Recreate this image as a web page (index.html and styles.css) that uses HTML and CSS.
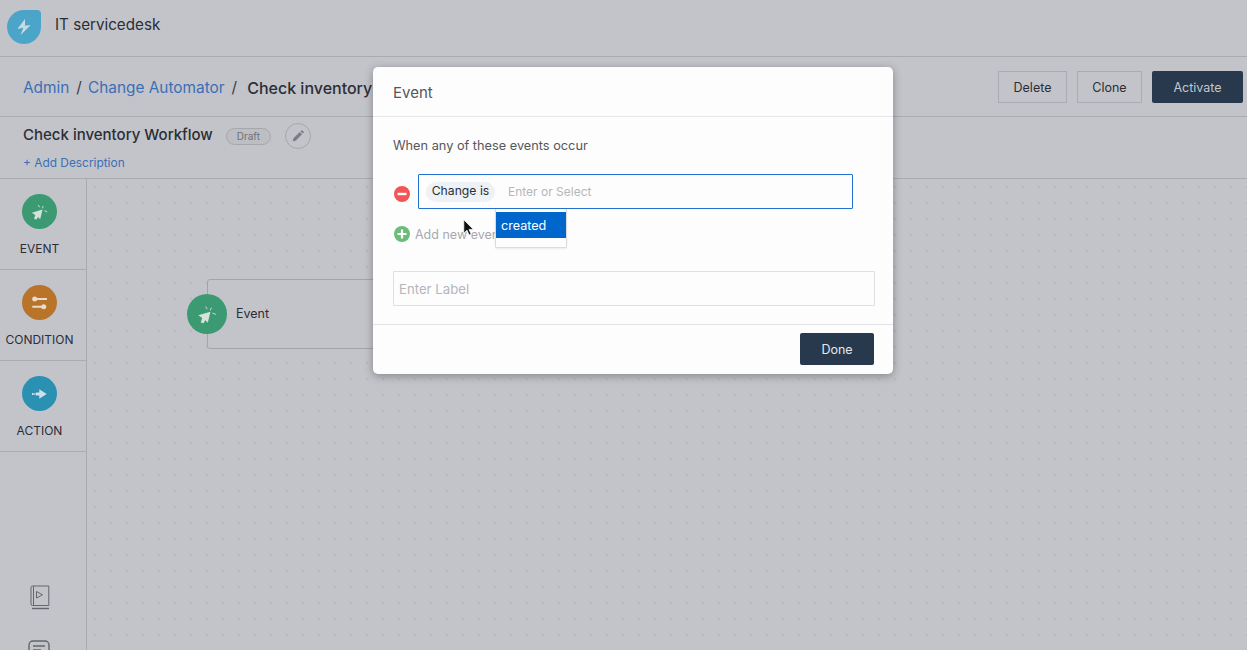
FILE: index.html
```
<!DOCTYPE html>
<html lang="en">
<head>
<meta charset="utf-8">
<title>Check inventory Workflow</title>
<link rel="stylesheet" href="styles.css">
</head>
<body>
<div class="page">
  <header class="topbar">
    <div class="logo">
      <svg viewBox="0 0 34 34" width="34" height="34"><path d="M18 9 10.300 19l6-1.300L13.700 25l10-10-5.700.7z" fill="#c5dbe4"/></svg>
    </div>
    <span class="app-name">IT servicedesk</span>
  </header>
  <div class="crumbbar">
    <nav class="crumbs">
      <a class="crumb-link">Admin</a><span class="sep">/</span>
      <a class="crumb-link">Change Automator</a><span class="sep">/</span>
      <span class="crumb-current">Check inventory</span>
    </nav>
    <div class="actions">
      <button class="btn">Delete</button>
      <button class="btn btn-clone">Clone</button>
      <button class="btn btn-primary">Activate</button>
    </div>
  </div>
  <div class="titlebar">
    <div class="title-row">
      <h1 class="title">Check inventory Workflow</h1>
      <span class="badge">Draft</span>
      <span class="edit">
        <svg viewBox="0 0 12 12" width="12" height="12"><path d="M0.800 11.200 1.300 8.400 7.800 1.900 10.100 4.200 3.600 10.700zM8.500 1.200 9.300.4a.8.8 0 0 1 1.100 0l1.200 1.200a.8.8 0 0 1 0 1.100l-.8.8z" fill="#7b7d84"/></svg>
      </span>
    </div>
    <a class="add-desc">+ Add Description</a>
  </div>
  <div class="workspace">
    <aside class="sidebar">
      <div class="tool">
        <span class="tool-icon green">
          <svg viewBox="0 0 35 35" width="35" height="35"><path d="M20.500 15.500 9.800 18.700l3.500 2.300-1.300 4 2.500.6 1.500-2.700 2.200 2.300z" fill="#d3e3db"/><path d="M16.300 11l1.300 2.300M21.300 12l-1 2.300M22.300 16.700l3 1.200" stroke="#d3e3db" stroke-width=".9" fill="none"/></svg>
        </span>
        <span class="tool-label">EVENT</span>
      </div>
      <div class="tool">
        <span class="tool-icon orange">
          <svg viewBox="0 0 35 35" width="35" height="35"><circle cx="12.700" cy="14" r="2.500" fill="#e9dccb"/><path d="M15 14h10M10.300 21.700H20" stroke="#e9dccb" stroke-width="2"/><circle cx="21.700" cy="21.700" r="2.500" fill="#e9dccb"/></svg>
        </span>
        <span class="tool-label">CONDITION</span>
      </div>
      <div class="tool">
        <span class="tool-icon blue">
          <svg viewBox="0 0 35 35" width="35" height="35"><path d="M17.300 13.300 24.700 18l-7.400 4.700v-3.200H14v-3h3.300z" fill="#cfe0e8"/><rect x="10" y="17" width="1.600" height="2" fill="#cfe0e8"/><rect x="12.300" y="17" width="1.200" height="2" fill="#cfe0e8"/></svg>
        </span>
        <span class="tool-label">ACTION</span>
      </div>
      <div class="side-foot">
        <svg class="book" viewBox="0 0 20 25" width="20" height="25"><path d="M2.500 1h16.300v19.500H2.500A1.500 1.500 0 0 1 1 19V2.500A1.500 1.500 0 0 1 2.500 1zM3.500 1v19.500" fill="none" stroke="#64666d" stroke-width="1"/><path d="M2 23.500h17" stroke="#64666d" stroke-width="1.400"/><path d="M6.500 6.500v6.500l6-3.200z" fill="none" stroke="#64666d" stroke-width="1"/></svg>
        <svg class="chat" viewBox="0 0 22 22" width="22" height="22"><path d="M5 1h12a4 4 0 0 1 4 4v8a4 4 0 0 1-4 4H5a4 4 0 0 1-4-4V5a4 4 0 0 1 4-4z" fill="none" stroke="#64666d" stroke-width="1.400"/><path d="M5 6h12M5 10h8" stroke="#64666d" stroke-width="1.400"/></svg>
      </div>
    </aside>
    <main class="canvas">
      <div class="node">
        <span class="node-icon">
          <svg viewBox="0 0 35 35" width="40" height="40"><path d="M20.500 15.500 9.800 18.700l3.500 2.300-1.300 4 2.500.6 1.500-2.700 2.200 2.300z" fill="#d3e3db"/><path d="M16.300 11l1.300 2.300M21.300 12l-1 2.300M22.300 16.700l3 1.200" stroke="#d3e3db" stroke-width=".8" fill="none"/></svg>
        </span>
        <span class="node-label">Event</span>
      </div>
    </main>
  </div>

  <section class="modal">
    <div class="modal-head">Event</div>
    <div class="modal-body">
      <p class="intro">When any of these events occur</p>
      <div class="event-row">
        <svg class="round-icon" viewBox="0 0 16 16" width="16" height="16"><circle cx="8" cy="8" r="8" fill="#f25555"/><rect x="3.500" y="6.800" width="9" height="2.400" fill="#fff"/></svg>
        <div class="event-input">
          <span class="pill">Change is</span>
          <span class="placeholder">Enter or Select</span>
        </div>
      </div>
      <div class="add-row">
        <svg class="round-icon" viewBox="0 0 16 16" width="16" height="16"><circle cx="8" cy="8" r="8" fill="#6cbd7a"/><path d="M3.500 8h9M8 3.500v9" stroke="#fff" stroke-width="2.200"/></svg>
        <span class="add-text">Add new event</span>
      </div>
      <div class="label-input">Enter Label</div>
    </div>
    <div class="modal-foot">
      <button class="btn btn-primary btn-done">Done</button>
    </div>
    <div class="dropdown"><div class="option">created</div></div>
    <svg class="cursor" viewBox="0 0 12 17" width="12" height="17"><path d="M.8.8v13.400l3.200-3 2.100 4.800 2-.9-2.100-4.700h4.300z" fill="#111" stroke="#fff" stroke-width=".7"/></svg>
  </section>
</div>
</body>
</html>
```
FILE: styles.css
```
* { box-sizing: border-box; }
html, body { margin: 0; padding: 0; }
body {
  font-family: Inter, "Liberation Sans", sans-serif;
  color: #2b2e36;
  background: #c3c4c9;
}
.page {
  position: relative;
  width: 1247px;
  height: 650px;
  overflow: hidden;
  display: flex;
  flex-direction: column;
  background: #c3c4c9;
}
.topbar {
  flex: none;
  height: 57px;
  display: flex;
  align-items: center;
  padding: 0 0 7px 7px;
  border-bottom: 1px solid #a9abb1;
}
.logo {
  width: 34px;
  height: 34px;
  margin-top: 4px;
  background: #4ba5c9;
  border-radius: 50% 4px 50% 50%;
}
.logo svg { display: block; }
.app-name { margin-left: 14px; font-size: 15.200px; }
.crumbbar {
  flex: none;
  height: 60px;
  display: flex;
  justify-content: space-between;
  align-items: flex-start;
  padding: 14px 4px 0 23px;
  border-bottom: 1px solid #a9abb1;
}
.crumbs { display: flex; font-size: 15.400px; line-height: 34px; white-space: nowrap; }
.crumb-link { color: #3b6fb5; }
.sep { margin: 0 6px 0 7px; color: #3a3d44; }
.crumb-current { margin-left: 4px; font-size: 16px; font-weight: 500; }
.actions { display: flex; gap: 10px; }
.btn {
  width: 69px;
  height: 32px;
  padding: 0;
  font: 400 12.500px Inter, "Liberation Sans", sans-serif;
  color: #2b2e36;
  background: transparent;
  border: 1px solid #a9adb3;
}
.btn-clone { width: 65px; }
.btn-primary {
  width: 91px;
  color: #c3c6cb;
  background: #28394d;
  border: 0;
  border-radius: 2px;
}
.titlebar {
  flex: none;
  height: 62px;
  padding: 9px 0 0 23px;
  border-bottom: 1px solid #a9abb1;
}
.title-row { display: flex; align-items: center; height: 20px; }
.title { margin: -3px 0 0; font-size: 15px; font-weight: 500; line-height: 20px; }
.badge {
  width: 45px;
  height: 17px;
  margin-left: 13px;
  font-size: 10px;
  line-height: 15px;
  text-align: center;
  color: #6f7178;
  background: #bcbec4;
  border: 1px solid #a5a7ad;
  border-radius: 9px;
}
.edit {
  width: 26px;
  height: 26px;
  margin-left: 14px;
  display: flex;
  align-items: center;
  justify-content: center;
  border: 1px solid #a5a7ad;
  border-radius: 50%;
}
.add-desc { display: block; margin-top: 7px; font-size: 11.900px; line-height: 20px; color: #3b6fb5; }
.workspace { flex: 1; display: flex; min-height: 0; }
.sidebar {
  flex: none;
  width: 87px;
  display: flex;
  flex-direction: column;
  border-right: 1px solid #a9abb1;
}
.tool {
  flex: none;
  height: 91px;
  display: flex;
  flex-direction: column;
  align-items: center;
  padding: 15px 7px 0 0;
  border-bottom: 1px solid #a9abb1;
}
.tool-icon {
  width: 35px;
  height: 35px;
  border-radius: 50%;
  display: block;
}
.tool-icon svg { display: block; }
.green { background: #3b9a72; }
.orange { background: #b9742a; }
.blue { background: #2a91b3; }
.tool-label { margin-top: 12px; font-size: 12px; line-height: 16px; }
.side-foot {
  flex: none;
  display: flex;
  flex-direction: column;
  align-items: center;
  gap: 30px;
  padding: 133px 7px 0 0;
}
.book, .chat { display: block; flex: none; }
.chat { margin-left: -2px; }
.canvas {
  flex: 1;
  position: relative;
  background-image: radial-gradient(circle at 8px 8px, #b9bac0 1.100px, transparent 1.700px);
  background-size: 16px 16px;
}
.node {
  position: absolute;
  left: 120px;
  top: 100px;
  width: 220px;
  height: 70px;
  border: 1px solid #a2a4aa;
  border-radius: 3px;
  background: #c3c4c9;
}
.node-icon {
  position: absolute;
  left: -21px;
  top: 14px;
  width: 40px;
  height: 40px;
  background: #3b9a72;
  border-radius: 50%;
}
.node-icon svg { display: block; }
.node-label { position: absolute; left: 28px; top: 25px; font-size: 12.500px; line-height: 18px; }
.modal {
  position: absolute;
  left: 373px;
  top: 67px;
  width: 520px;
  height: 307px;
  background: #fdfdfd;
  border-radius: 5px;
  box-shadow: 0 2px 8px rgba(40, 42, 50, .4);
  display: flex;
  flex-direction: column;
}
.modal-head {
  flex: none;
  height: 50px;
  padding-left: 20px;
  font-size: 15px;
  line-height: 51px;
  color: #55575c;
  border-bottom: 1px solid #e8e8ea;
}
.modal-body { flex: 1; padding: 0 18px 0 20px; }
.intro { margin: 0; padding-top: 20px; font-size: 12.750px; line-height: 18px; color: #55575c; }
.event-row { display: flex; align-items: center; margin-top: 19px; height: 35px; }
.round-icon { flex: none; display: block; }
.event-row .round-icon { margin: 5px 8px 0 1px; }
.event-input {
  width: 435px;
  height: 35px;
  display: flex;
  align-items: center;
  padding: 0 7px;
  border: 1px solid #2270cf;
  border-radius: 1px;
}
.pill {
  width: 69px;
  height: 20px;
  font-size: 12.200px;
  line-height: 18px;
  text-align: center;
  background: #eef1f6;
  border-radius: 10px;
  color: #2b2e36;
}
.placeholder { margin-left: 13px; font-size: 12px; color: #b5b6ba; }
.add-row { display: flex; align-items: center; height: 20px; margin-top: 15px; }
.add-row .round-icon { margin: 0 5px 0 1px; }
.add-text { font-size: 12.500px; color: #a8a9ad; }
.label-input {
  width: 482px;
  height: 35px;
  margin-top: 27px;
  padding-left: 5px;
  font-size: 13.200px;
  line-height: 34px;
  color: #b5b6ba;
  border: 1px solid #dfe0e2;
  border-radius: 1px;
}
.modal-foot {
  flex: none;
  height: 50px;
  display: flex;
  justify-content: flex-end;
  padding: 8px 19px 0 0;
  border-top: 1px solid #e3e3e5;
}
.btn-done { width: 74px; color: #e4e6e9; }
.dropdown {
  position: absolute;
  left: 122px;
  top: 142px;
  width: 72px;
  height: 39px;
  padding-top: 3px;
  background: #fdfdfd;
  border: 1px solid #dcdcde;
  border-top: 0;
  border-radius: 0 0 2px 2px;
  box-shadow: 0 1px 2px rgba(0, 0, 0, .08);
}
.option {
  height: 26px;
  padding-left: 5px;
  font-size: 12.600px;
  line-height: 27px;
  color: #fff;
  background: #0066cc;
}
.cursor { position: absolute; left: 90px; top: 152px; }
```
